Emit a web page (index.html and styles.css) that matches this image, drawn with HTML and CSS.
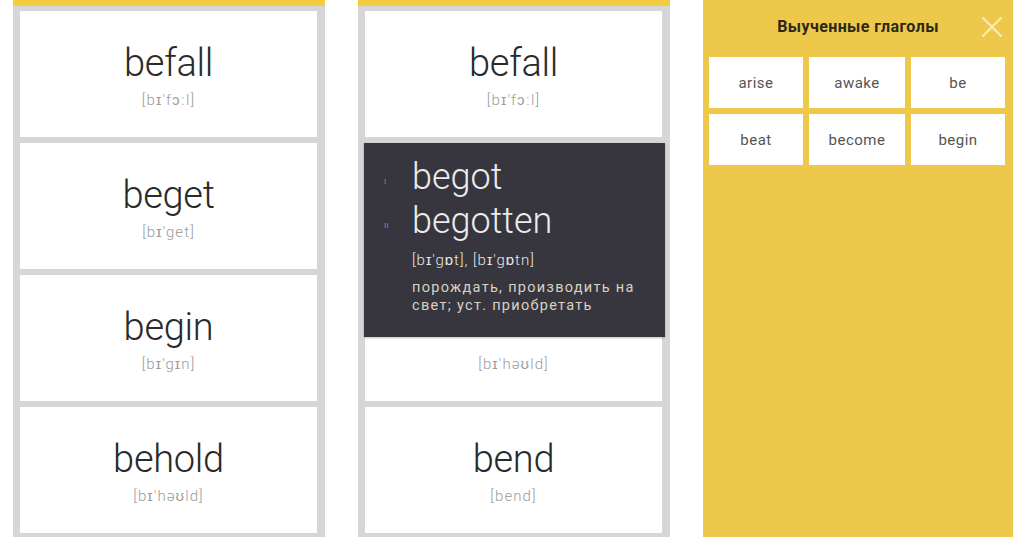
FILE: index.html
```html
<!DOCTYPE html>
<html lang="ru">
<head>
<meta charset="utf-8">
<title>Irregular verbs</title>
<link rel="stylesheet" href="styles.css">
</head>
<body>
<div class="screens">
  <section class="phone">
    <div class="topbar"></div>
    <div class="list">
      <div class="card"><div class="word">befall</div><div class="trans">[bɪ'fɔːl]</div></div>
      <div class="card"><div class="word">beget</div><div class="trans">[bɪ'get]</div></div>
      <div class="card"><div class="word">begin</div><div class="trans">[bɪ'gɪn]</div></div>
      <div class="card"><div class="word">behold</div><div class="trans">[bɪ'həʊld]</div></div>
    </div>
  </section>

  <section class="phone">
    <div class="topbar"></div>
    <div class="list">
      <div class="card"><div class="word">befall</div><div class="trans">[bɪ'fɔːl]</div></div>
      <div class="card covered"><div class="word">beget</div><div class="trans">[bɪ'get]</div></div>
      <div class="card half-covered"><div class="word">behold</div><div class="trans">[bɪ'həʊld]</div></div>
      <div class="card"><div class="word">bend</div><div class="trans">[bend]</div></div>
      <div class="detail">
        <div class="form"><span class="num">I</span><span class="fword">begot</span></div>
        <div class="form"><span class="num">II</span><span class="fword">begotten</span></div>
        <div class="dtrans">[bɪ'gɒt], [bɪ'gɒtn]</div>
        <div class="meaning">порождать, производить на свет; уст. приобретать</div>
      </div>
    </div>
  </section>

  <section class="learned">
    <header class="lhead">
      <h1 class="ltitle">Выученные глаголы</h1>
      <svg class="close" width="22" height="22" viewBox="0 0 22 22"><path d="M2 2 L20 20 M20 2 L2 20" stroke="#f8edbd" stroke-width="2" fill="none" stroke-linecap="round"/></svg>
    </header>
    <div class="grid">
      <div class="tile">arise</div>
      <div class="tile">awake</div>
      <div class="tile">be</div>
      <div class="tile">beat</div>
      <div class="tile">become</div>
      <div class="tile">begin</div>
    </div>
  </section>
</div>
</body>
</html>
```

FILE: styles.css
```css
* { box-sizing: border-box; margin: 0; padding: 0; }
html, body { width: 1024px; height: 546px; background: #ffffff; overflow: hidden; }
body { font-family: Roboto, "Liberation Sans", sans-serif; }

.screens {
  display: flex;
  gap: 33px;
  padding-left: 13px;
  align-items: flex-start;
}

.phone {
  width: 312px;
  height: 537px;
  background: #d6d6d8;
  display: flex;
  flex-direction: column;
}
.topbar { height: 6px; background: #f3cd3e; flex: none; }

.list {
  position: relative;
  display: flex;
  flex-direction: column;
  gap: 6px;
  padding: 5px 8px 0 7px;
}
.card {
  height: 126px;
  background: #ffffff;
  display: flex;
  flex-direction: column;
  align-items: center;
  justify-content: center;
  padding-top: 3px;
}
.word {
  font-weight: 300;
  font-size: 38px;
  line-height: 40px;
  color: #2a2a2a;
  letter-spacing: -0.3px;
}
.trans {
  margin-top: 8px;
  font-weight: 300;
  font-size: 15px;
  line-height: 18px;
  color: #9b9b9b;
  letter-spacing: 1.1px;
}
.covered > * { visibility: hidden; }
.half-covered .word { visibility: hidden; }

.detail {
  position: absolute;
  left: 6px;
  right: 5px;
  top: 137px;
  height: 194px;
  background: #37363e;
  padding: 12px 20px 0 20px;
  color: #ececec;
  box-shadow: 0 1px 2px rgba(0,0,0,0.25);
}
.form {
  display: flex;
  align-items: center;
  height: 44px;
}
.num {
  width: 28px;
  font-size: 8px;
  color: #8d8c90;
  padding-top: 8px;
}
.fword {
  font-weight: 300;
  font-size: 36px;
  line-height: 40px;
  color: #ececec;
}
.dtrans {
  margin: 8px 0 0 28px;
  font-size: 15px;
  line-height: 18px;
  color: #e6e6e6;
  font-weight: 300;
  letter-spacing: 1px;
}
.meaning {
  margin: 10px 0 0 28px;
  font-size: 14.5px;
  line-height: 18px;
  color: #d8d2c2;
  letter-spacing: 1.3px;
  width: 240px;
}

.learned {
  width: 310px;
  height: 537px;
  background: #eec84a;
  display: flex;
  flex-direction: column;
}
.lhead {
  position: relative;
  height: 57px;
  display: flex;
  align-items: center;
  justify-content: center;
  padding-bottom: 4px;
}
.ltitle {
  font-size: 16px;
  font-weight: 700;
  color: #2c2817;
  letter-spacing: 0.4px;
}
.close {
  position: absolute;
  right: 10px;
  top: 16px;
}
.grid {
  display: grid;
  grid-template-columns: 94px 96px 94px;
  grid-auto-rows: 51px;
  gap: 6px;
  padding: 0 8px 0 6px;
}
.tile {
  background: #ffffff;
  display: flex;
  align-items: center;
  justify-content: center;
  font-size: 15px;
  color: #555555;
  letter-spacing: 0.5px;
}
```
